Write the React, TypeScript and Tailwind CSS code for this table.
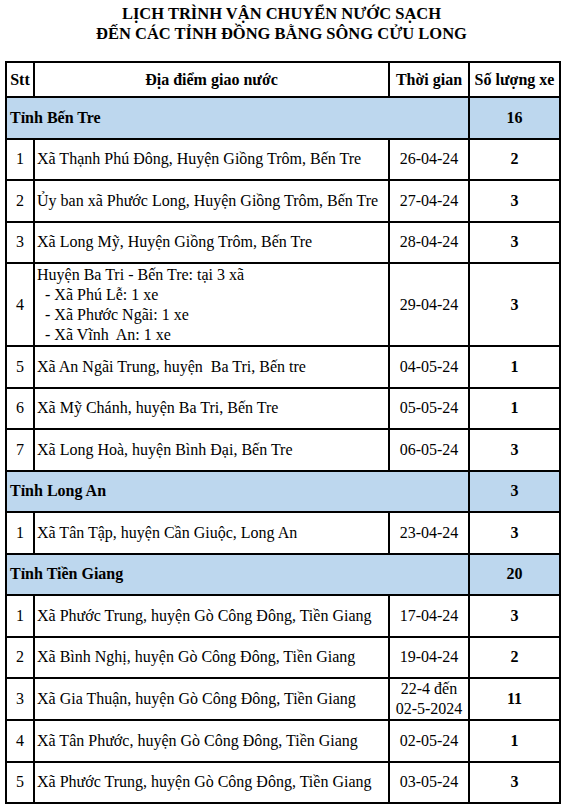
import React from 'react';

type Row = { stt: number; place: React.ReactNode; date: React.ReactNode; count: number; tall?: boolean };
type Group = { name: string; total: number; rows: Row[] };

const groups: Group[] = [
  {
    name: 'Tỉnh Bến Tre',
    total: 16,
    rows: [
      { stt: 1, place: 'Xã Thạnh Phú Đông, Huyện Giồng Trôm, Bến Tre', date: '26-04-24', count: 2 },
      { stt: 2, place: 'Ủy ban xã Phước Long, Huyện Giồng Trôm, Bến Tre', date: '27-04-24', count: 3 },
      { stt: 3, place: 'Xã Long Mỹ, Huyện Giồng Trôm, Bến Tre', date: '28-04-24', count: 3 },
      {
        stt: 4,
        tall: true,
        place: (
          <div className="leading-[20px]">
            <div>Huyện Ba Tri - Bến Tre: tại 3 xã</div>
            <div className="whitespace-pre">{'  - Xã Phú Lễ: 1 xe'}</div>
            <div className="whitespace-pre">{'  - Xã Phước Ngãi: 1 xe'}</div>
            <div className="whitespace-pre">{'  - Xã Vĩnh  An: 1 xe'}</div>
          </div>
        ),
        date: '29-04-24',
        count: 3,
      },
      { stt: 5, place: <span className="whitespace-pre">{'Xã An Ngãi Trung, huyện  Ba Tri, Bến tre'}</span>, date: '04-05-24', count: 1 },
      { stt: 6, place: 'Xã Mỹ Chánh, huyện Ba Tri, Bến Tre', date: '05-05-24', count: 1 },
      { stt: 7, place: 'Xã Long Hoà, huyện Bình Đại, Bến Tre', date: '06-05-24', count: 3 },
    ],
  },
  {
    name: 'Tỉnh Long An',
    total: 3,
    rows: [{ stt: 1, place: 'Xã Tân Tập, huyện Cần Giuộc, Long An', date: '23-04-24', count: 3 }],
  },
  {
    name: 'Tỉnh Tiền Giang',
    total: 20,
    rows: [
      { stt: 1, place: 'Xã Phước Trung, huyện Gò Công Đông, Tiền Giang', date: '17-04-24', count: 3 },
      { stt: 2, place: 'Xã Bình Nghị, huyện Gò Công Đông, Tiền Giang', date: '19-04-24', count: 2 },
      {
        stt: 3,
        place: 'Xã Gia Thuận, huyện Gò Công Đông, Tiền Giang',
        date: (
          <div className="leading-[20px]">
            <div>22-4 đến</div>
            <div>02-5-2024</div>
          </div>
        ),
        count: 11,
      },
      { stt: 4, place: 'Xã Tân Phước, huyện Gò Công Đông, Tiền Giang', date: '02-05-24', count: 1 },
      { stt: 5, place: 'Xã Phước Trung, huyện Gò Công Đông, Tiền Giang', date: '03-05-24', count: 3 },
    ],
  },
];

const cell = 'border-2 border-black p-0';

export default function App() {
  return (
    <div className="w-[563px] h-[806px] bg-white text-black font-['Liberation_Serif','Times_New_Roman',serif] overflow-hidden">
      {/* Title */}
      <div className="pt-[4px] text-center font-bold text-[16.5px] leading-[20px]">
        <div>LỊCH TRÌNH VẬN CHUYỂN NƯỚC SẠCH</div>
        <div>ĐẾN CÁC TỈNH ĐỒNG BẰNG SÔNG CỬU LONG</div>
      </div>

      <table className="mt-[17px] ml-[5px] w-[554px] border-collapse table-fixed text-[16px]">
        <colgroup>
          <col className="w-[28px]" />
          <col className="w-[355px]" />
          <col className="w-[80px]" />
          <col className="w-[91px]" />
        </colgroup>
        <thead>
          <tr className="h-[35px] font-bold">
            <th className={`${cell} text-center`}>Stt</th>
            <th className={`${cell} text-center`}>Địa điểm giao nước</th>
            <th className={`${cell} text-center whitespace-nowrap`}>Thời gian</th>
            <th className={`${cell} text-center whitespace-nowrap`}>Số lượng xe</th>
          </tr>
        </thead>
        <tbody>
          {groups.map((g) => (
            <React.Fragment key={g.name}>
              <tr className="h-[41.5px] bg-[#bdd7ee] font-bold">
                <td colSpan={3} className={`${cell} pl-[3px]`}>{g.name}</td>
                <td className={`${cell} text-center`}>{g.total}</td>
              </tr>
              {g.rows.map((r) => (
                <tr key={`${g.name}-${r.stt}`} className={r.tall ? 'h-[83px]' : 'h-[41.5px]'}>
                  <td className={`${cell} text-center`}>{r.stt}</td>
                  <td className={`${cell} pl-[2px] whitespace-nowrap`}>{r.place}</td>
                  <td className={`${cell} text-center`}>{r.date}</td>
                  <td className={`${cell} text-center font-bold`}>{r.count}</td>
                </tr>
              ))}
            </React.Fragment>
          ))}
        </tbody>
      </table>
    </div>
  );
}
